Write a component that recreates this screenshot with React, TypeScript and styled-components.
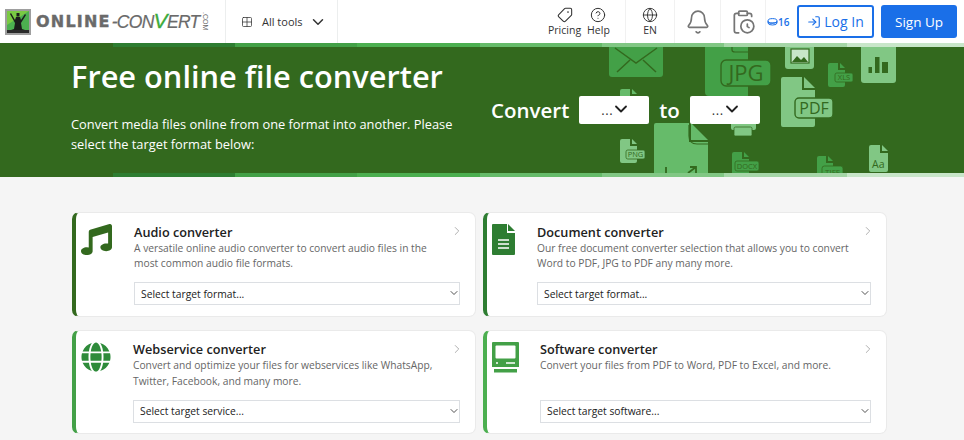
import React from "react";
import styled, { createGlobalStyle } from "styled-components";
import { FaMusic, FaGlobe } from "react-icons/fa";
import {
  Bell,
  ChevronDown,
  ChevronRight,
  CircleHelp,
  ClipboardClock,
  Globe,
  Grid2x2,
  LogIn,
  Tag,
} from "lucide-react";

const GlobalStyle = createGlobalStyle`
  html, body {
    margin: 0;
    padding: 0;
    background: #f5f5f5;
    font-family: "Open Sans", "Liberation Sans", sans-serif;
    color: #212121;
  }
  * { box-sizing: border-box; }
`;

const STRIPE = ["#33691e", "#2e7d32", "#43a047", "#4caf50", "#66bb6a", "#81c784", "#a5d6a7", "#c8e6c9"];
const STRIPE_WIDTHS = [113, 122, 122, 123, 122, 122, 123, 117];

function Stripes() {
  return (
    <StripeRow>
      {STRIPE.map((c, i) => (
        <StripeCell key={c} $color={c} $width={STRIPE_WIDTHS[i]} />
      ))}
    </StripeRow>
  );
}

function DocShape({ x, y, w, h, fold, fill }: { x: number; y: number; w: number; h: number; fold: number; fill: string }) {
  return (
    <g>
      <path d={`M${x + 2} ${y}H${x + w - fold - 1}V${y + fold + 1}H${x + w}V${y + h - 2}Q${x + w} ${y + h} ${x + w - 2} ${y + h}H${x + 2}Q${x} ${y + h} ${x} ${y + h - 2}V${y + 2}Q${x} ${y} ${x + 2} ${y}Z`} fill={fill} />
      <path d={`M${x + w - fold + 1} ${y}L${x + w} ${y + fold - 1}H${x + w - fold + 1}Z`} fill={fill} />
    </g>
  );
}

function DocLabel({ x, y, w, h, size, fill, children }: { x: number; y: number; w: number; h: number; size: number; fill: string; children: string }) {
  return (
    <g>
      <rect x={x} y={y} width={w} height={h} rx={h / 5} fill={fill} stroke="#33691e" strokeWidth={size > 12 ? 1.4 : 0.8} />
      <text x={x + w / 2} y={y + h / 2 + size * 0.36} textAnchor="middle" fontSize={size} fontFamily="'Open Sans', sans-serif" fill="#33691e">
        {children}
      </text>
    </g>
  );
}

function HeroArt() {
  return (
    <ArtLayer viewBox="0 47 964 126" aria-hidden="true">
      <rect x="609" y="30" width="54" height="47" rx="3" fill="#43a047" />
      <path d="M615 48L636 63 657 48M617 72L630 60M656 72L643 60" fill="none" stroke="#33691e" strokeWidth="1.5" />
      <path d="M705 47H748V96H709Q705 96 705 92Z" fill="#43a047" />
      <path d="M732 47V50Q732 52 735 52H748" fill="none" stroke="#33691e" strokeWidth="1.2" />
      <DocLabel x={721} y={60} w={50} h={26} size={22} fill="#43a047">JPG</DocLabel>
      <rect x="785" y="40" width="29" height="29" rx="3" fill="#81c784" />
      <rect x="791" y="49" width="18" height="14" fill="#c8e6c9" stroke="#33691e" strokeWidth="1.2" />
      <path d="M792 62L797 56 801 60 804 57 808 62Z" fill="#33691e" />
      <DocShape x={828} y={63} w={17} h={24} fold={6} fill="#43a047" />
      <DocLabel x={835} y={73} w={18} h={9} size={7.5} fill="#43a047">XLS</DocLabel>
      <rect x="861" y="40" width="35" height="43" rx="3" fill="#81c784" />
      <path d="M868.500 73V67H872V73ZM875 73V57H879.500V73ZM882 73V62H888V73Z" fill="#33691e" />
      <DocShape x={781} y={77} w={34} h={50} fold={12} fill="#81c784" />
      <DocLabel x={795} y={98} w={38} h={20} size={16} fill="#81c784">PDF</DocLabel>
      <DocShape x={620} y={89} w={17} h={20} fold={6} fill="#66bb6a" />
      <DocShape x={620} y={139} w={17} h={24} fold={6} fill="#81c784" />
      <DocLabel x={626} y={150} w={19} h={9} size={7.5} fill="#81c784">PNG</DocLabel>
      <DocShape x={654} y={123} w={54} h={60} fold={18} fill="#66bb6a" />
      <path d="M689 125V136Q689 144 697 144H708" fill="none" stroke="#33691e" strokeWidth="1.2" />
      <path d="M666 167V173M688 173L696 167M690 167H696V173" fill="none" stroke="#33691e" strokeWidth="1.8" />
      <rect x="731" y="120" width="25" height="10" rx="2" fill="#81c784" />
      <rect x="734" y="127" width="18" height="9" rx="1.500" fill="#81c784" stroke="#33691e" strokeWidth="0.8" />
      <DocShape x={732} y={152} w={17} h={24} fold={6} fill="#43a047" />
      <DocLabel x={735} y={161} w={24} h={10} size={7.5} fill="#43a047">DOCX</DocLabel>
      <DocShape x={817} y={156} w={16} h={24} fold={6} fill="#43a047" />
      <DocLabel x={822} y={166} w={21} h={12} size={8} fill="#43a047">TIFF</DocLabel>
      <DocShape x={869} y={145} w={19} h={27} fold={7} fill="#81c784" />
      <text x="872" y="168" fontSize="10.500" fontFamily="'Open Sans', sans-serif" fill="#33691e">Aa</text>
    </ArtLayer>
  );
}

function Logo() {
  return (
    <LogoLink>
      <LogoMark viewBox="0 0 26 26" aria-hidden="true">
        <rect width="26" height="26" fill="#9e9e9e" />
        <rect x="2" y="2" width="22" height="22" fill="#4caf50" />
        <path d="M2 2H24L2 16Z" fill="#7ac943" />
        <path d="M6 4L10 11 11 8H15L16 11 20 5 21 6 16 14 17 20 20 21H6L9 20 10 14 5 5ZM11.500 4H14.500V7.500H11.500Z" fill="#1b1b1b" />
        <rect x="2" y="21" width="22" height="3" fill="#2b2b2b" />
      </LogoMark>
      <LogoBold>ONLINE</LogoBold>
      <LogoThin>-CON<LogoGreen>V</LogoGreen>ERT</LogoThin>
      <LogoCom>.COM</LogoCom>
    </LogoLink>
  );
}

function TargetSelect({ label }: { label: string }) {
  return (
    <SelectWrap>
      <NativeSelect defaultValue={label}>
        <option>{label}</option>
      </NativeSelect>
      <SelectChevron><ChevronDown size={12} strokeWidth={1.7} /></SelectChevron>
    </SelectWrap>
  );
}

const DocumentIcon = () => (
  <svg width="23" height="31" viewBox="0 0 23 31" aria-hidden="true">
    <path d="M1 0H15V9H23V30Q23 31 22 31H1Q0 31 0 30V1Q0 0 1 0Z" fill="#2e7d32" />
    <path d="M16 0L23 7H16Z" fill="#2e7d32" />
    <path d="M6 16H17M6 20H17M6 24H17" stroke="#fff" strokeWidth="1.600" />
  </svg>
);

const DesktopIcon = () => (
  <svg width="27" height="31" viewBox="0 0 27 31" aria-hidden="true">
    <path d="M1 0H26Q27 0 27 1V25H0V1Q0 0 1 0Z" fill="#43a047" />
    <rect x="3.500" y="3.500" width="20" height="13" rx="1" fill="#fff" />
    <path d="M4 21H6M14 21H23" stroke="#fff" strokeWidth="1.500" />
    <rect x="2" y="27" width="23" height="3.500" fill="#43a047" />
  </svg>
);

const CARDS = [
  {
    title: "Audio converter",
    text: "A versatile online audio converter to convert audio files in the most common audio file formats.",
    select: "Select target format...",
    accent: "#33691e",
    slot: 58,
    icon: <FaMusic size={31} color="#33691e" />,
  },
  {
    title: "Document converter",
    text: "Our free document converter selection that allows you to convert Word to PDF, JPG to PDF any many more.",
    select: "Select target format...",
    accent: "#2e7d32",
    slot: 50,
    icon: <DocumentIcon />,
  },
  {
    title: "Webservice converter",
    text: "Convert and optimize your files for webservices like WhatsApp, Twitter, Facebook, and many more.",
    select: "Select target service...",
    accent: "#43a047",
    slot: 57,
    icon: <FaGlobe size={30} color="#2e8b3a" />,
  },
  {
    title: "Software converter",
    text: "Convert your files from PDF to Word, PDF to Excel, and more.",
    select: "Select target software...",
    accent: "#4caf50",
    slot: 53,
    icon: <DesktopIcon />,
  },
];

export default function App() {
  return (
    <Page>
      <GlobalStyle />
      <Header>
        <Logo />
        <ToolsCell>
          <Grid2x2 size={12} strokeWidth={1.5} />
          <span>All tools</span>
          <ChevronDown size={18} strokeWidth={2} />
        </ToolsCell>
        <Spacer />
        <IconLinks>
          <IconLink>
            <TagIcon size={16} strokeWidth={1.6} />
            <span>Pricing</span>
          </IconLink>
          <IconLink>
            <CircleHelp size={16} strokeWidth={1.5} />
            <span>Help</span>
          </IconLink>
        </IconLinks>
        <IconCell $width={49}>
          <IconLink>
            <Globe size={16} strokeWidth={1.4} />
            <span>EN</span>
          </IconLink>
        </IconCell>
        <IconCell $width={46}><Bell size={26} strokeWidth={1.5} color="#757575" /></IconCell>
        <IconCell $width={45}><ClipboardClock size={26} strokeWidth={1.6} color="#757575" /></IconCell>
        <Credits>
          <svg width="11" height="8" viewBox="0 0 11 8" aria-hidden="true">
            <ellipse cx="5.500" cy="2.800" rx="4.500" ry="2.200" fill="none" stroke="#1a6fe8" strokeWidth="1" />
            <path d="M1 3V5Q1 7 5.500 7T10 5V3M1 4.500Q3 6 10 4.500" fill="none" stroke="#1a6fe8" strokeWidth="1" />
          </svg>
          16
        </Credits>
        <LoginButton><LogIn size={14} strokeWidth={2} />Log In</LoginButton>
        <SignupButton>Sign Up</SignupButton>
      </Header>
      <Stripes />
      <Hero>
        <HeroArt />
        <HeroIntro>
          <HeroTitle>Free online file converter</HeroTitle>
          <HeroText>Convert media files online from one format into another. Please select the target format below:</HeroText>
        </HeroIntro>
        <ConvertRow>
          <span>Convert</span>
          <FormatButton><Dots>...</Dots><ChevronDown size={20} strokeWidth={2.2} /></FormatButton>
          <span>to</span>
          <FormatButton><Dots>...</Dots><ChevronDown size={20} strokeWidth={2.2} /></FormatButton>
        </ConvertRow>
      </Hero>
      <Stripes />
      <CardGrid>
        {CARDS.map((card) => (
          <Card key={card.title} $accent={card.accent}>
            <CardIcon $slot={card.slot}>{card.icon}</CardIcon>
            <CardBody>
              <CardTitle>{card.title}</CardTitle>
              <CardText>{card.text}</CardText>
              <TargetSelect label={card.select} />
            </CardBody>
            <CardArrow><ChevronRight size={14} strokeWidth={1.4} /></CardArrow>
          </Card>
        ))}
      </CardGrid>
    </Page>
  );
}

const Page = styled.div`
  width: 964px;
  height: 440px;
  overflow: hidden;
`;

const Header = styled.header`
  height: 43px;
  background: #fff;
  display: flex;
  align-items: stretch;
`;

const LogoLink = styled.a`
  width: 226px;
  padding-left: 5px;
  display: flex;
  align-items: center;
  border-right: 1px solid #eceeee;
  white-space: nowrap;
  color: #6a6a6a;
`;

const LogoMark = styled.svg`
  width: 26px;
  height: 26px;
  margin-right: 5px;
  flex: none;
`;

const LogoBold = styled.span`
  font-family: "DejaVu Sans", sans-serif;
  font-weight: 700;
  font-size: 16px;
  letter-spacing: 1.2px;
  -webkit-text-stroke: 0.4px #6a6a6a;
`;

const LogoThin = styled.span`
  margin-left: 1px;
  font-family: "Liberation Sans", sans-serif;
  font-style: italic;
  font-size: 17.500px;
  letter-spacing: -0.7px;
  -webkit-text-stroke: 0.2px #6a6a6a;
`;

const LogoGreen = styled.span`
  font-size: 21px;
  line-height: 1;
  color: #3cab3c;
  -webkit-text-stroke: 0.3px #3cab3c;
`;

const LogoCom = styled.span`
  font-family: "Liberation Sans", sans-serif;
  font-size: 7px;
  writing-mode: vertical-rl;
  margin-left: 2px;
`;

const ToolsCell = styled.div`
  width: 112px;
  padding-left: 15px;
  display: flex;
  align-items: center;
  gap: 9px;
  font-size: 11px;
  border-right: 1px solid #eceeee;
  color: #333;

  svg:last-child {
    margin-left: -3px;
  }
`;

const Spacer = styled.div`
  flex: 1;
`;

const IconLinks = styled.div`
  width: 78px;
  display: flex;
  align-items: center;
  gap: 6px;
  border-right: 1px solid #f1f1f1;
`;

const IconCell = styled.div<{ $width: number }>`
  width: ${(p) => p.$width}px;
  display: flex;
  align-items: center;
  justify-content: center;
  border-right: 1px solid #f1f1f1;
`;

const IconLink = styled.a`
  display: flex;
  flex-direction: column;
  align-items: center;
  font-size: 10.5px;
  line-height: 14px;
  color: #333;
`;

const TagIcon = styled(Tag)`
  transform: rotate(90deg);
`;

const Credits = styled.div`
  width: 31px;
  padding-left: 1px;
  display: flex;
  align-items: center;
  font-size: 10px;
  font-weight: 600;
  color: #1a6fe8;
`;

const LoginButton = styled.button`
  width: 77px;
  height: 33px;
  margin: 5px 0 0 0;
  display: flex;
  align-items: center;
  justify-content: center;
  gap: 3px;
  font: 500 14px "Open Sans", sans-serif;
  color: #1a6fe8;
  background: #fff;
  border: 2px solid #1a6fe8;
  border-radius: 3px;
  padding: 0;
`;

const SignupButton = styled(LoginButton)`
  margin: 5px 7px 0 7px;
  color: #fff;
  background: #1a6fe8;
  border: none;
  width: 76px;
  font-size: 13.5px;
  font-weight: 500;
`;

const StripeRow = styled.div`
  display: flex;
  height: 4px;
`;

const StripeCell = styled.div<{ $color: string; $width: number }>`
  width: ${(p) => p.$width}px;
  background: ${(p) => p.$color};
`;

const Hero = styled.section`
  position: relative;
  height: 126px;
  padding-left: 71px;
  display: flex;
  background: #33691e;
  color: #fff;
  overflow: hidden;
`;

const ArtLayer = styled.svg`
  position: absolute;
  inset: 0;
  width: 964px;
  height: 126px;
`;

const HeroIntro = styled.div`
  position: relative;
  width: 420px;
`;

const HeroTitle = styled.h1`
  margin: 6px 0 0;
  font-size: 30.750px;
  line-height: 46px;
  font-weight: 600;
  white-space: nowrap;
`;

const HeroText = styled.p`
  max-width: 385px;
  margin: 16px 0 0;
  font-size: 12.830px;
  line-height: 19.500px;
`;

const ConvertRow = styled.div`
  position: relative;
  height: 28px;
  margin-top: 49px;
  display: flex;
  align-items: center;
  gap: 10px;
  font-size: 20.500px;
  font-weight: 600;
`;

const FormatButton = styled.div`
  width: 70px;
  height: 28px;
  display: flex;
  align-items: center;
  justify-content: center;
  padding-left: 4px;
  font-size: 13px;
  font-weight: 400;
  color: #333;
  background: #fff;
  border-radius: 2px;

  svg {
    margin: -3px 0 0 -2px;
    color: #212121;
  }
`;

const Dots = styled.span`
  letter-spacing: 0.6px;
`;

const CardGrid = styled.main`
  width: 815px;
  margin: 35.300px 0 0 72px;
  display: grid;
  grid-template-columns: 404px 404px;
  grid-auto-rows: 104.500px;
  gap: 13px 7px;
`;

const Card = styled.article<{ $accent: string }>`
  position: relative;
  display: flex;
  background: #fff;
  border: 1px solid #eaeaea;
  border-left: 4px solid ${(p) => p.$accent};
  border-radius: 7px;
`;

const CardIcon = styled.div<{ $slot: number }>`
  width: ${(p) => p.$slot}px;
  flex: none;
  padding: 11px 0 0 5px;
`;

const CardBody = styled.div`
  flex: 1;
  min-width: 0;
  padding: 10.500px 15px 0 0;
`;

const CardTitle = styled.h2`
  margin: 0;
  font-size: 12.700px;
  line-height: 17px;
  font-weight: 600;
  color: #212121;
`;

const CardText = styled.p`
  margin: 0;
  max-width: 315px;
  height: 32px;
  font-size: 10.250px;
  line-height: 15.500px;
  color: #666;
`;

const SelectWrap = styled.div`
  position: relative;
  margin-top: 9.500px;
`;

const NativeSelect = styled.select`
  appearance: none;
  display: block;
  width: 100%;
  height: 23px;
  padding: 0 6px;
  font: 400 10.300px "Open Sans", sans-serif;
  color: #212121;
  background: #fff;
  border: 1px solid #dcdfe3;
  border-radius: 0;
`;

const SelectChevron = styled.span`
  position: absolute;
  right: 0;
  top: 5px;
  display: flex;
  color: #333;
  pointer-events: none;
`;

const CardArrow = styled.span`
  position: absolute;
  top: 11px;
  right: 11px;
  display: flex;
  color: #9e9e9e;
`;
